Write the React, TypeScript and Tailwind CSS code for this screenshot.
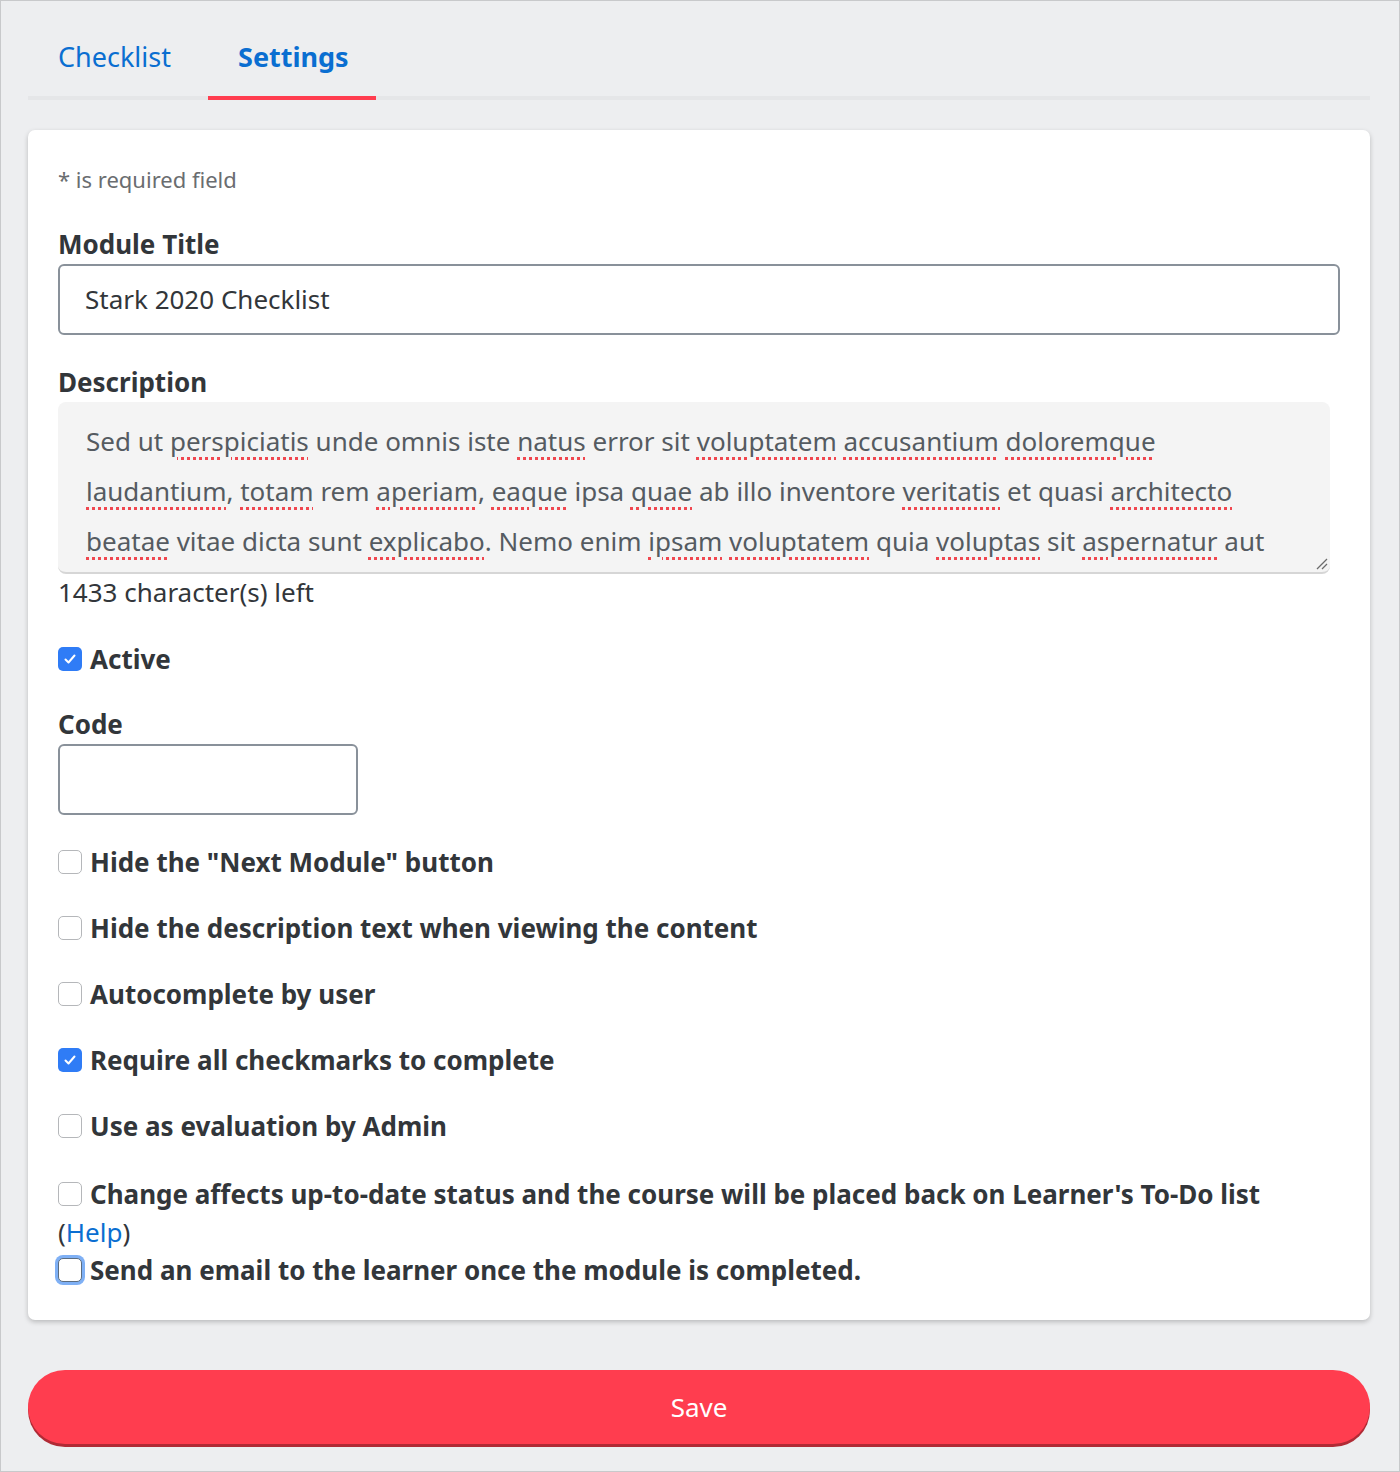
import React from "react";

const FONT = "font-['Noto_Sans',_'Open_Sans',_sans-serif]";

type Opt = { label: string; checked?: boolean };

const options: Opt[] = [
  { label: 'Hide the "Next Module" button' },
  { label: "Hide the description text when viewing the content" },
  { label: "Autocomplete by user" },
  { label: "Require all checkmarks to complete", checked: true },
  { label: "Use as evaluation by Admin" },
];

// words that get the spellcheck squiggle
const flagged = new Set([
  "perspiciatis", "natus", "voluptatem", "accusantium", "doloremque",
  "laudantium", "totam", "aperiam", "eaque", "quae", "veritatis",
  "architecto", "beatae", "explicabo", "ipsam", "voluptas", "aspernatur",
]);

const descLines = [
  "Sed ut perspiciatis unde omnis iste natus error sit voluptatem accusantium doloremque",
  "laudantium, totam rem aperiam, eaque ipsa quae ab illo inventore veritatis et quasi architecto",
  "beatae vitae dicta sunt explicabo. Nemo enim ipsam voluptatem quia voluptas sit aspernatur aut",
];

const Line = ({ text }: { text: string }) => {
  const parts = text.split(/(\s+|[.,])/);
  return (
    <div>
      {parts.map((p, i) =>
        flagged.has(p) ? (
          <span
            key={i}
            className="underline decoration-dotted decoration-[#f0474f] decoration-[3px] underline-offset-[6px]"
          >
            {p}
          </span>
        ) : (
          <span key={i}>{p}</span>
        )
      )}
    </div>
  );
};

const Box = ({ checked, focused }: { checked?: boolean; focused?: boolean }) => {
  if (checked) {
    return (
      <span className="flex h-[24px] w-[24px] shrink-0 items-center justify-center rounded-[5px] bg-[#2f7cf6]">
        <svg width="14" height="14" viewBox="0 0 14 14" fill="none">
          <path d="M2.5 7.5l3 3 6-7" stroke="white" strokeWidth="2" strokeLinecap="round" strokeLinejoin="round" />
        </svg>
      </span>
    );
  }
  return (
    <span
      className={
        "h-[24px] w-[24px] shrink-0 rounded-[5px] border bg-white " +
        (focused
          ? "border-[#5b6d80] ring-[3px] ring-[#7fb0f5]"
          : "border-[#b5b7ba]")
      }
    />
  );
};

const CheckRow = ({ label, checked }: Opt) => (
  <label className="flex items-center gap-2 text-[26px] font-bold leading-[34px] text-[#32363a]">
    <Box checked={checked} />
    <span>{label}</span>
  </label>
);

export default function App() {
  return (
    <div className={"min-h-[1472px] w-[1400px] border border-[#c8c9cb] bg-[#edeef0] " + FONT}>
      <div className="pl-[27px] pr-[29px] pt-[38px]">
        {/* tabs */}
        <div className="flex border-b-4 border-[#e5e6e8]">
          <div className="-mb-1 w-[180px] pl-[30px] pb-[21px] text-[27px] leading-[36px] text-[#0a6ed1]">
            Checklist
          </div>
          <div className="-mb-1 w-[168px] border-b-4 border-[#ff3d4f] pl-[30px] pb-[21px] text-[27px] font-bold leading-[36px] text-[#0a6ed1]">
            Settings
          </div>
        </div>

        {/* form card */}
        <div className="mt-[30px] rounded-[7px] bg-white px-[30px] pt-[34px] pb-[31px] shadow-[0_2px_5px_rgba(0,0,0,0.22)]">
          <div className="text-[22px] leading-[30px] text-[#6a6d70]">* is required field</div>

          <div className="mt-[35px] text-[26px] font-bold leading-[30px] text-[#32363a]">Module Title</div>
          <div className="mt-[5px] flex h-[71px] items-center rounded-[6px] border-2 border-[#89919a] px-[25px] text-[26px] text-[#32363a]">
            Stark 2020 Checklist
          </div>

          <div className="mt-[32px] text-[26px] font-bold leading-[30px] text-[#32363a]">Description</div>
          <div className="relative mt-[5px] mr-[10px] h-[172px] overflow-hidden rounded-[8px] border-b-2 border-[#d6d6d6] bg-[#f4f4f4] px-[28px] pt-[14px] text-[26px] leading-[50px] text-[#555b61]">
            {descLines.map((l) => (
              <Line key={l} text={l} />
            ))}
            <svg className="absolute right-[2px] bottom-[2px]" width="14" height="14" viewBox="0 0 14 14">
              <path d="M13 3L3 13M13 8L8 13" stroke="#6b6b6b" strokeWidth="1.3" />
            </svg>
          </div>
          <div className="text-[26px] leading-[36px] text-[#32363a]">1433 character(s) left</div>

          <div className="mt-[32px]">
            <CheckRow label="Active" checked />
          </div>

          <div className="mt-[33px] text-[26px] font-bold leading-[30px] text-[#32363a]">Code</div>
          <div className="mt-[5px] h-[71px] w-[300px] rounded-[6px] border-2 border-[#89919a]" />

          <div className="mt-[30px] flex flex-col gap-[32px]">
            {options.map((o) => (
              <CheckRow key={o.label} {...o} />
            ))}
          </div>

          <div className="mt-[32px] text-[26px] leading-[38px] text-[#32363a]">
            <label className="flex items-center gap-2 font-bold">
              <Box />
              <span>Change affects up-to-date status and the course will be placed back on Learner's To-Do list</span>
            </label>
            <div>
              (<span className="text-[#0a6ed1]">Help</span>)
            </div>
            <label className="flex items-center gap-2 font-bold">
              <Box focused />
              <span>Send an email to the learner once the module is completed.</span>
            </label>
          </div>
        </div>

        <button className="mt-[50px] h-[74px] w-full rounded-full bg-[#ff3d4f] text-[26px] text-white shadow-[0_3px_0_#b02a35]">
          Save
        </button>
      </div>
    </div>
  );
}
